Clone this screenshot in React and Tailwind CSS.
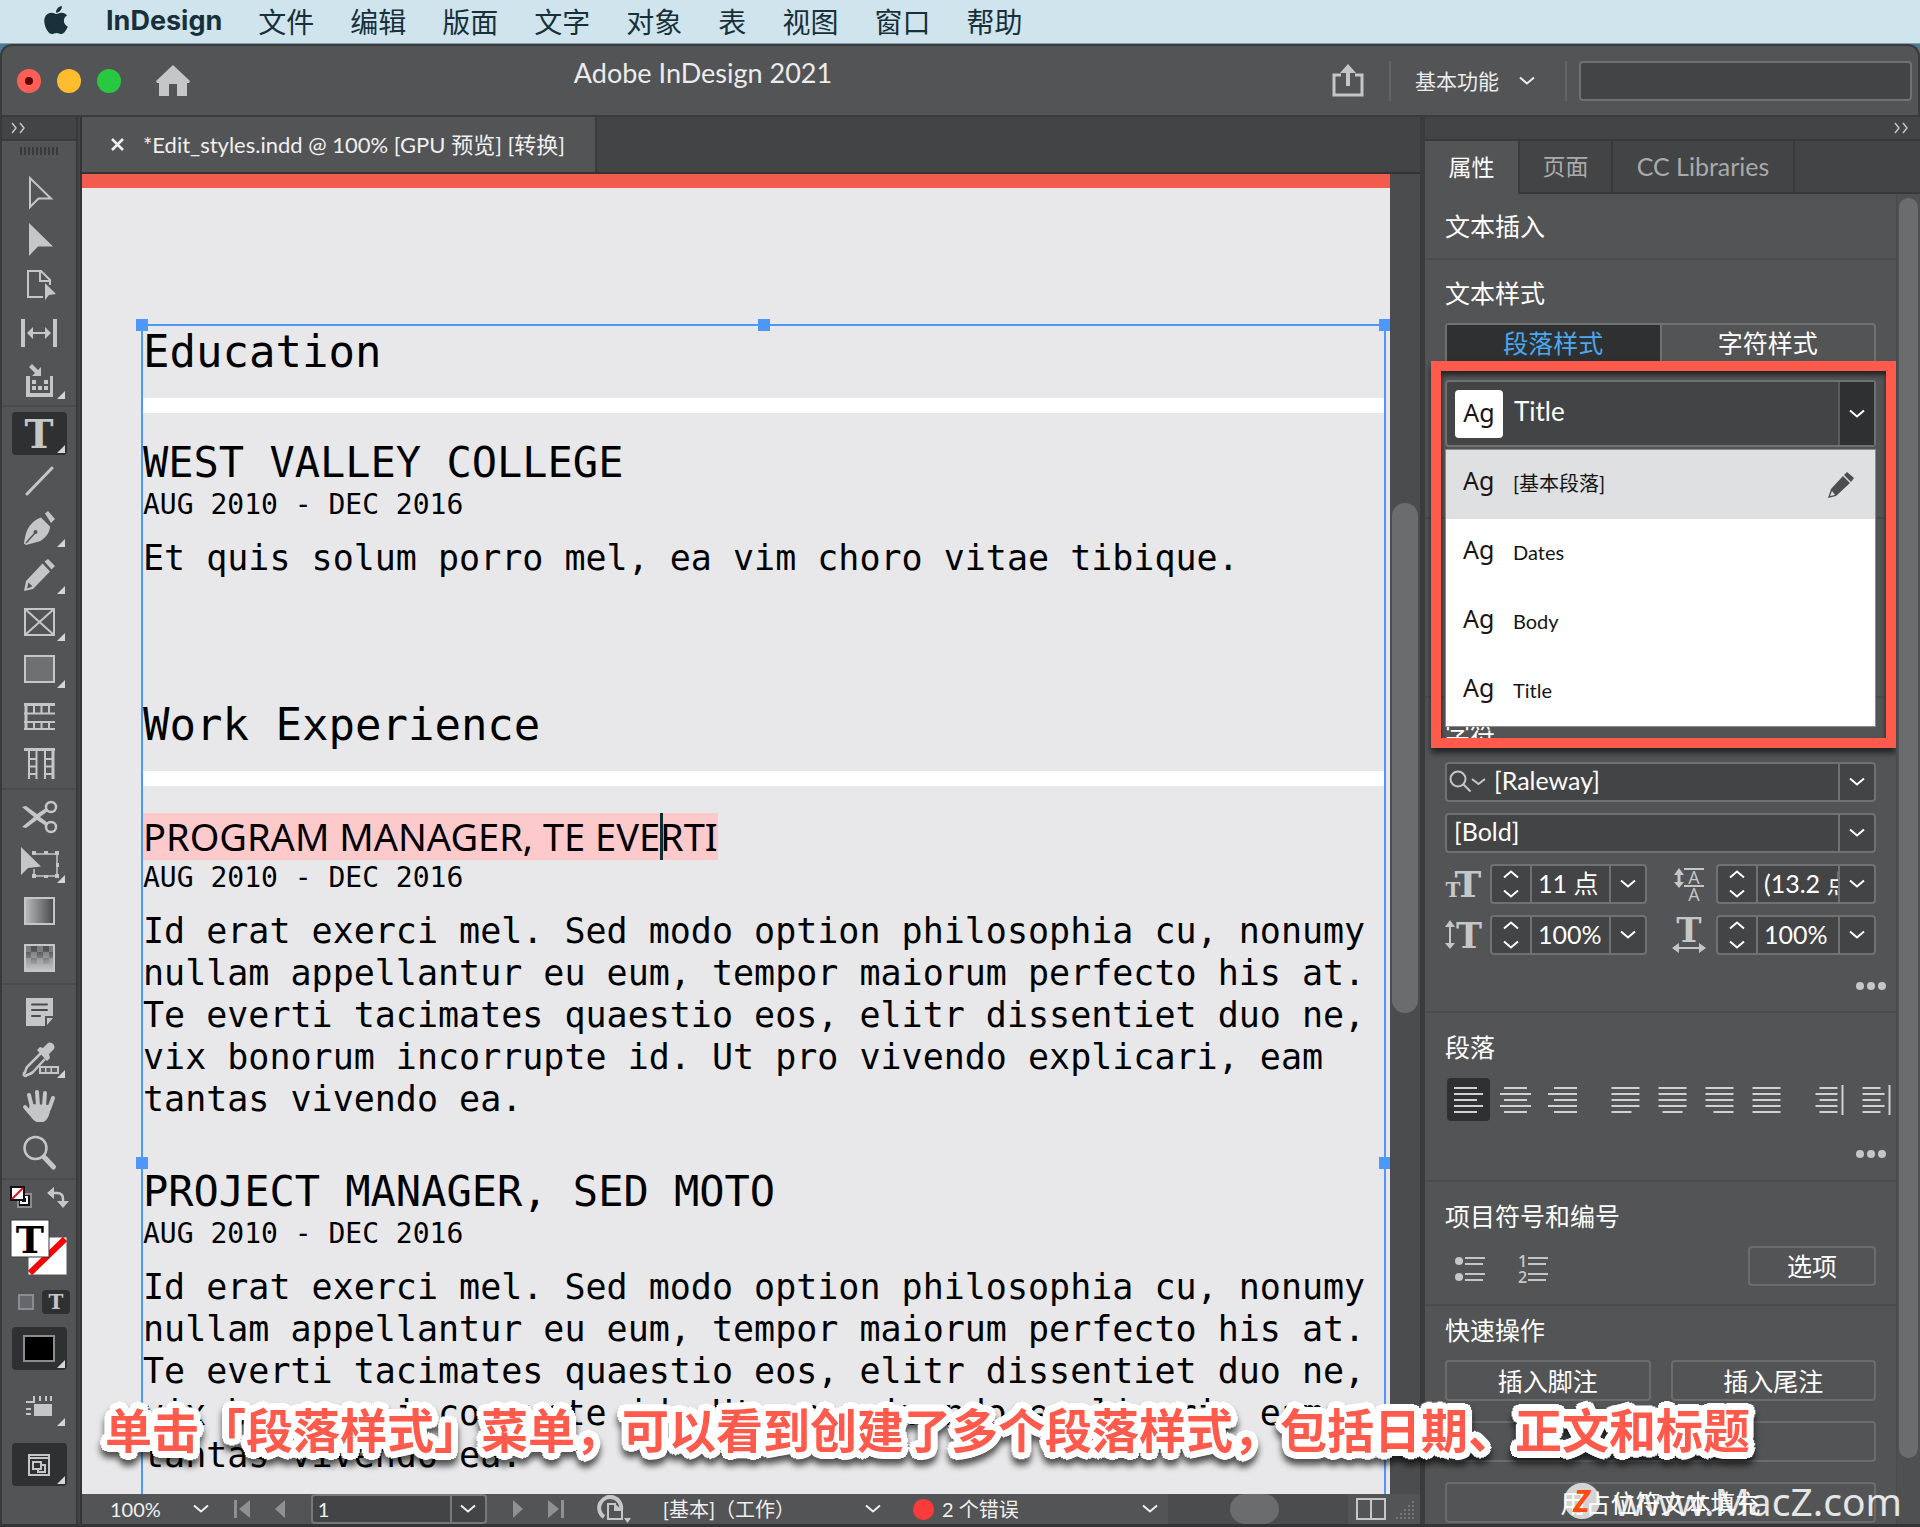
import { FaApple } from "react-icons/fa";

const ICON = "#c5c6c8";

const Chevron = ({ className = "" }) => (
  <svg width="16" height="10" viewBox="0 0 16 10" fill="none" stroke="currentColor" strokeWidth="2" className={className}>
    <path d="M1 1.5l7 6 7-6" />
  </svg>
);

const DoubleChevron = () => (
  <svg width="16" height="12" viewBox="0 0 16 12" fill="none" stroke={ICON} strokeWidth="1.5">
    <path d="M1 1l4 5-4 5M9 1l4 5-4 5" />
  </svg>
);

const SlabT = ({ x, y, size, fill = ICON }) => (
  <text x={x} y={y} fontSize={size} fill={fill} textAnchor="middle" fontWeight="bold" fontFamily="'DejaVu Serif', serif">
    T
  </text>
);

const SelectionIcon = () => <path d="M11 6v29l8.500-8.500H32z" fill="none" stroke={ICON} strokeWidth="2" />;

const DirectIcon = () => <path d="M10 4v33l9-9.500h15z" fill={ICON} />;

const PageIcon = () => (
  <g fill="none" stroke={ICON} strokeWidth="2">
    <path d="M24 31H9V5h13l9 9v5M21 5v10h10" />
    <path d="M26 17v17l4-5 7-1z" fill={ICON} stroke="none" />
  </g>
);

const GapIcon = () => (
  <g fill={ICON}>
    <path d="M2 6h4v28H2zM34 6h4v28h-4zM8 20l6-6v5h12v-5l6 6-6 6v-5H14v5z" />
  </g>
);

const CollectorIcon = () => (
  <g fill={ICON}>
    <path d="M7 16h4v17h20V16h3v21H7zM13 20h4v4h-4zM25 20h4v4h-4zM13 26h4v4h-4zM19 26h4v4h-4zM25 26h4v4h-4z" />
    <path d="M10 7l3-3 6 6 3-3v9h-9l3-3z" />
  </g>
);

const TypeIcon = () => <SlabT x={20} y={34} size={39} />;

const LineIcon = () => <path d="M8 33L33 7" stroke={ICON} strokeWidth="3" strokeLinecap="round" />;

const PenIcon = () => (
  <g fill={ICON}>
    <path d="M26 5.500l3-2.500 7 8-4 4z" />
    <path d="M22 9.500l9 9c0 5-4 12-11 15L7 37l-2-1.500c1-9 3-14 6-18 3-4 7-6.500 11-8z" />
    <path d="M7 35l9-10" stroke="#535456" strokeWidth="1.500" />
    <circle cx="16.500" cy="24" r="2" fill="#535456" />
  </g>
);

const PencilIcon = () => (
  <g fill={ICON}>
    <path d="M25.500 6.500L29 4l7 7-3.500 3.500z" />
    <path d="M23.500 8.500l7.500 8L14 34 5 36l2-10z" />
    <path d="M9.500 27.500l4 4-5.500 2z" fill="#535456" />
  </g>
);

const FrameIcon = () => (
  <path d="M6 7h29v26H6zM6 7l29 26M35 7L6 33" fill="none" stroke={ICON} strokeWidth="2" />
);

const RectIcon = () => <rect x="6" y="7" width="29" height="26" fill="#6f7072" stroke={ICON} strokeWidth="2" />;

const HorizontalGridIcon = () => (
  <g fill="none" stroke={ICON}>
    <path d="M5 8.500h31M7 7v27" strokeWidth="3" />
    <path d="M5 17.500h31M5 26h31M5 33h31M15 9v9M22.500 9v9M30 9v9M15 26v7M22.500 26v7M30 26v7" strokeWidth="2" />
  </g>
);

const VerticalGridIcon = () => (
  <g fill="none" stroke={ICON}>
    <path d="M5 6.500h31M34 5v31" strokeWidth="3" />
    <path d="M10 7v29M17.500 7v29M26 7v29M10 16h8M10 23.500h8M10 31h8M26 16h8M26 23.500h8M26 31h8" strokeWidth="2" />
  </g>
);

const ScissorsIcon = () => (
  <g>
    <g fill="none" stroke={ICON} strokeWidth="2.500">
      <circle cx="32" cy="10" r="5" />
      <circle cx="32" cy="30" r="5" />
    </g>
    <path d="M3 10l4-1 11 8 9-6 2 3-8 6 8 6-2 3-9-6-11 8-4-1 12-10z" fill={ICON} />
  </g>
);

const TransformIcon = () => (
  <g fill={ICON}>
    <path d="M2 3v28l7-7 13-1.500z" />
    <path d="M16 10h22v22H15v-7" fill="none" stroke={ICON} strokeWidth="1.500" />
    <path d="M13 7h4v4h-4zM25 7h4v3h-4zM36 7h4v4h-4zM37 19h3v4h-3zM36 30h4v4h-4zM25 31h4v3h-4zM13 30h4v4h-4z" />
  </g>
);

const GradientIcon = () => (
  <g>
    <defs>
      <linearGradient id="gradient-tool">
        <stop offset="0" stopColor="#bbbcbe" />
        <stop offset="1" stopColor="#47484a" />
      </linearGradient>
    </defs>
    <rect x="6" y="7" width="29" height="26" fill="url(#gradient-tool)" stroke={ICON} strokeWidth="2" />
  </g>
);

const FeatherIcon = () => (
  <g>
    <defs>
      <linearGradient id="feather-tool" x1="0" x2="0" y1="0" y2="1">
        <stop offset="0.2" stopColor="#c5c6c8" stopOpacity="0" />
        <stop offset="1" stopColor="#c5c6c8" />
      </linearGradient>
    </defs>
    <rect x="6" y="7" width="29" height="26" fill="#7b7c7e" />
    <path d="M12 8h6v6h-6zM24 8h6v6h-6zM6 14h6v6H6zM18 14h6v6h-6zM30 14h5v6h-5zM12 20h6v6h-6zM24 20h6v6h-6z" fill="#525355" />
    <rect x="6" y="7" width="29" height="26" fill="url(#feather-tool)" stroke={ICON} strokeWidth="2" />
  </g>
);

const NoteIcon = () => (
  <g>
    <path d="M7 6h27v18h-8v10H7z" fill={ICON} />
    <path d="M28 26h6l-6 7z" fill={ICON} />
    <path d="M13 12.500h15M13 18h15M13 24h8" stroke="#4a4b4d" strokeWidth="2" strokeLinecap="round" />
  </g>
);

const EyedropperIcon = () => (
  <g>
    <path d="M22 14L8 28c-2 3-1 6-3 6-1 2 1 4 3 2 2-1 4-1 6-3l12-13" fill="none" stroke={ICON} strokeWidth="2.500" />
    <path d="M18 11l3-3 3 1 5-5c3-2 8 2 6 6l-5 5 1 4-3 3z" fill={ICON} />
    <path d="M20 27h20v8H20z" fill={ICON} />
    <path d="M22 29h4v4h-4zM27.500 29h4v4h-4zM33 29h5v4h-5z" fill="#5c5d5f" />
  </g>
);

const HandIcon = () => (
  <g fill="none" stroke={ICON} strokeWidth="4" strokeLinecap="round">
    <path d="M13 21L10 9M19 20L18 6M25 20l1-13M30 23l4-11M12 28l-6-7" />
    <path d="M12 19l18 1c1 8-3 14-6 15h-6c-4-1-5-5-8-9z" fill={ICON} strokeWidth="2" />
  </g>
);

const ZoomIcon = () => (
  <g fill="none" stroke={ICON}>
    <circle cx="16.500" cy="15" r="11" strokeWidth="2.500" />
    <path d="M25 24l9.500 10" strokeWidth="5" strokeLinecap="round" />
  </g>
);

const BulletIcon = () => (
  <svg width="30" height="28" viewBox="0 0 30 28" fill={ICON}>
    <circle cx="4" cy="6" r="4" />
    <circle cx="4" cy="22" r="4" />
    <path d="M10 2h20v2H10zM10 8h18v2H10zM10 18h20v2H10zM10 24h18v2H10z" />
  </svg>
);

const NumberIcon = () => (
  <svg
    width="30"
    height="28"
    viewBox="0 0 30 28"
    fill={ICON}
    fontFamily="'Open Sans', sans-serif"
    fontSize="16"
    fontWeight="600"
    className="overflow-visible"
  >
    <text x="0" y="12">1</text>
    <text x="0" y="28">2</text>
    <path d="M10 2h20v2H10zM10 8h18v2H10zM10 18h20v2H10zM10 24h18v2H10z" />
  </svg>
);

const toolGroups = [
  [
    { name: "选择工具", Icon: SelectionIcon },
    { name: "直接选择工具", Icon: DirectIcon },
    { name: "页面工具", Icon: PageIcon },
    { name: "间隙工具", Icon: GapIcon },
    { name: "内容收集器工具", Icon: CollectorIcon, more: true },
  ],
  [
    { name: "文字工具", Icon: TypeIcon, more: true, active: true },
    { name: "直线工具", Icon: LineIcon },
    { name: "钢笔工具", Icon: PenIcon, more: true },
    { name: "铅笔工具", Icon: PencilIcon, more: true },
    { name: "矩形框架工具", Icon: FrameIcon, more: true },
    { name: "矩形工具", Icon: RectIcon, more: true },
    { name: "水平网格工具", Icon: HorizontalGridIcon },
    { name: "垂直网格工具", Icon: VerticalGridIcon },
  ],
  [
    { name: "剪刀工具", Icon: ScissorsIcon },
    { name: "自由变换工具", Icon: TransformIcon, more: true },
    { name: "渐变色板工具", Icon: GradientIcon },
    { name: "渐变羽化工具", Icon: FeatherIcon },
  ],
  [
    { name: "附注工具", Icon: NoteIcon },
    { name: "颜色主题工具", Icon: EyedropperIcon, more: true },
    { name: "抓手工具", Icon: HandIcon },
    { name: "缩放显示工具", Icon: ZoomIcon },
  ],
];

const Corner = () => (
  <svg width="8" height="8" viewBox="0 0 8 8" className="absolute right-0.5 bottom-0.5">
    <path d="M8 0v8H0z" fill="#d4d5d7" />
  </svg>
);

const ToolButton = ({ name, Icon, more, active }) => (
  <button
    aria-label={name}
    className={`relative my-0.5 flex h-[43px] w-[55px] items-center justify-center rounded ${active ? "bg-[#2f3032]" : ""}`}
  >
    <svg width="40" height="40" viewBox="0 0 40 40" className="overflow-visible">
      <Icon />
    </svg>
    {more && <Corner />}
  </button>
);

const Toolbar = () => (
  <aside className="flex w-[78px] shrink-0 flex-col border-x-2 border-[#38393b] bg-[#535456]">
    <div className="flex h-6 items-center border-b-2 border-[#3a3b3d] bg-[#434446] pl-[9px]">
      <DoubleChevron />
    </div>
    <div className="mx-auto mt-1.5 mb-[13px] h-2 w-[38px] bg-[repeating-linear-gradient(90deg,#38393b_0px,#38393b_2px,#535456_2px,#535456_4px)]" />
    {toolGroups.map((group, i) => (
      <div key={i} className="mb-[3px] flex flex-col items-center border-b-2 border-[#4a4b4d] pb-0.5">
        {group.map((tool) => (
          <ToolButton key={tool.name} {...tool} />
        ))}
      </div>
    ))}
    <div className="flex justify-between px-[7px] pt-0.5">
      <button aria-label="默认填色和描边">
        <svg width="24" height="24" viewBox="0 0 24 24">
          <path d="M9 9h13v13H9z" fill="#111" stroke="#8b8c8e" strokeWidth="2" />
          <path d="M12 12h6v6h-6z" fill="none" stroke="#fff" strokeWidth="2" />
          <path d="M2 2h13v13H2z" fill="#fff" stroke="#111" strokeWidth="2" />
          <path d="M3 14L14 3" stroke="#e8141c" strokeWidth="2" />
        </svg>
      </button>
      <button aria-label="互换填色和描边">
        <svg width="24" height="24" viewBox="0 0 24 24" fill="none" stroke={ICON} strokeWidth="2.5">
          <path d="M8 8h4q6 0 6 6v3" />
          <path d="M2 8l7-6v12zM12 16h12l-6 7z" fill={ICON} stroke="none" />
        </svg>
      </button>
    </div>
    <div className="px-2 pt-2.5">
      <svg width="60" height="58" viewBox="0 0 60 58" className="overflow-visible">
        <path d="M18 18h39v38H18z" fill="#fff" stroke="#555" />
        <path d="M20 54L55 20" stroke="#fb0007" strokeWidth="6" />
        <path d="M1 1h38v37H1z" fill="#fff" stroke="#38393b" />
        <SlabT x={20} y={34} size={38} fill="#000" />
      </svg>
    </div>
    <div className="mt-2.5 flex h-[30px] items-center justify-between pr-1.5 pl-4">
      <button aria-label="格式针对容器" className="h-4 w-4 border-2 border-[#8b8c8e] bg-[#66676a]" />
      <button aria-label="格式针对文本" className="flex h-6 w-7 items-center justify-center rounded bg-[#2f3032]">
        <svg width="20" height="18" viewBox="0 0 20 18" className="overflow-visible">
          <SlabT x={10} y={16} size={20} />
        </svg>
      </button>
    </div>
    <div className="flex flex-col items-center gap-[15px] pt-2.5">
      <button aria-label="应用颜色" className="relative flex h-[43px] w-[55px] items-center justify-center rounded bg-[#2f3032]">
        <span className="h-[27px] w-8 border-2 border-[#8b8c8e] bg-black" />
        <Corner />
      </button>
      <button aria-label="视图选项" className="relative flex h-[43px] w-[55px] items-center justify-center">
        <svg width="28" height="24" viewBox="0 0 28 24" fill={ICON}>
          <path d="M9 9h18v12H9zM8 1h2v7H1V6h7zM14 1h2v5h-2zM20 1h2v5h-2zM25 1h2v5h-2zM1 13h5v2H1zM1 18h5v2H1z" />
        </svg>
        <Corner />
      </button>
      <button aria-label="屏幕模式" className="relative flex h-[43px] w-[55px] items-center justify-center rounded bg-[#2f3032]">
        <svg width="24" height="24" viewBox="0 0 24 24" fill="none" stroke={ICON} strokeWidth="2">
          <path d="M2 2h20v20H2zM2 5h20" />
          <path d="M6 9h8v7H6z" />
          <path d="M15 12h3v7h-7v-3" />
        </svg>
        <Corner />
      </button>
    </div>
  </aside>
);

const menus = ["文件", "编辑", "版面", "文字", "对象", "表", "视图", "窗口", "帮助"];

const MenuBar = () => (
  <nav className="flex h-11 shrink-0 items-center border-b border-[#7fa3b5] bg-[#d0e4ed] pl-10 text-[28px] text-[#17303a]">
    <FaApple size={32} className="mb-1" />
    <button className="ml-[34px] font-[Inter] text-[27px] font-bold">InDesign</button>
    <div className="ml-9 flex gap-9">
      {menus.map((menu) => (
        <button key={menu}>{menu}</button>
      ))}
    </div>
  </nav>
);

const TitleBar = () => (
  <header className="flex h-[73px] shrink-0 items-center rounded-t-xl border-2 border-[#3a3b3d] bg-[#535456] pr-1.5 pl-[15px]">
    <div className="flex gap-4">
      <button aria-label="关闭" className="flex h-6 w-6 items-center justify-center rounded-full bg-[#ff5f57]">
        <span className="h-2 w-2 rounded-full bg-[#5c0503]" />
      </button>
      <button aria-label="最小化" className="h-6 w-6 rounded-full bg-[#febc2e]" />
      <button aria-label="缩放" className="h-6 w-6 rounded-full bg-[#28c840]" />
    </div>
    <button aria-label="主页" className="ml-[34px]">
      <svg width="36" height="32" viewBox="0 0 36 32" fill={ICON}>
        <path d="M18 0l17 16-1 2h-2v13H22V19h-8v12H4V18H2l-1-2z" />
      </svg>
    </button>
    <h1 className="flex-1 pr-[116px] pb-3.5 text-center text-[27px] text-[#ececed]">Adobe InDesign 2021</h1>
    <button aria-label="共享">
      <svg width="34" height="36" viewBox="0 0 34 36">
        <path d="M10 12H3v20h28V12h-7" fill="none" stroke={ICON} strokeWidth="3" />
        <path d="M17 1l8 9h-6v13h-4V10H9z" fill={ICON} />
      </svg>
    </button>
    <div className="mx-6 h-10 w-0.5 bg-[#636466]" />
    <button className="flex items-center gap-5 text-[21px] text-[#ececed]">
      基本功能
      <Chevron />
    </button>
    <div className="mr-3 ml-[30px] h-10 w-0.5 bg-[#636466]" />
    <input
      aria-label="搜索"
      className="h-10 w-[333px] rounded border-2 border-[#707173] bg-[#434446] px-2 text-[22px] text-white outline-none"
    />
  </header>
);

const body = `Id erat exerci mel. Sed modo option philosophia cu, nonumy
nullam appellantur eu eum, tempor maiorum perfecto his at.
Te everti tacimates quaestio eos, elitr dissentiet duo ne,
vix bonorum incorrupte id. Ut pro vivendo explicari, eam
tantas vivendo ea.`;

const SectionHeading = ({ children }) => (
  <>
    <h2 className="h-12 text-[44px] leading-[48px]">{children}</h2>
    <div className="mt-[22px] h-[15px] bg-white" />
  </>
);

const Dates = () => <p className="mt-0.5 text-[28px] leading-10">AUG 2010 - DEC 2016</p>;

const Body = ({ children }) => <p className="mt-3 text-[35px] leading-[42px]">{children}</p>;

const Handle = ({ className }) => <span className={`absolute h-3 w-3 bg-[#4f98fb] ${className}`} />;

const DocumentPage = () => (
  <article className="flex min-w-0 flex-1 flex-col overflow-hidden border-t-[14px] border-[#f25c4e] bg-[#e8e8ea] pt-[136px] pl-[59px] font-['DejaVu_Sans_Mono',monospace] text-black">
    <div className="relative mr-1 min-h-0 flex-1 border-2 border-b-0 border-[#4f98fb]">
      <Handle className="-top-[7px] -left-[7px]" />
      <Handle className="-top-[7px] left-1/2 -ml-1.5" />
      <Handle className="-top-[7px] -right-[7px]" />
      <Handle className="top-[831px] -left-[7px]" />
      <Handle className="top-[831px] -right-[7px]" />

      <section className="whitespace-pre pt-0.5">
        <SectionHeading>Education</SectionHeading>
        <h3 className="mt-[30px] text-[42px] leading-10">WEST VALLEY COLLEGE</h3>
        <Dates />
        <Body>Et quis solum porro mel, ea vim choro vitae tibique.</Body>
      </section>

      <section className="mt-[122px] whitespace-pre">
        <SectionHeading>Work Experience</SectionHeading>
        <h3 className="mt-[30px] flex h-10 items-center font-['Noto_Sans',sans-serif] text-[38px]">
          <span className="flex h-[47px] items-center bg-[#fccaca]">
            PROGRAM MANAGER, TE EVE
            <span className="-mr-[3px] h-full w-[3px] bg-[#0b2f33]" />
            RTI
          </span>
        </h3>
        <Dates />
        <Body>{body}</Body>
        <h3 className="mt-[52px] text-[42px] leading-10">PROJECT MANAGER, SED MOTO</h3>
        <Dates />
        <Body>{body}</Body>
      </section>
    </div>
  </article>
);

const StatusBar = () => (
  <footer className="flex h-[30px] shrink-0 items-center bg-[#535456] pl-7 text-xl text-[#f0f0f1]">
    <button className="flex items-center gap-8">
      100%
      <Chevron />
    </button>
    <div className="ml-6 flex gap-6 text-[#8f9092]">
      <button aria-label="第一页">
        <svg width="18" height="18" viewBox="0 0 18 18" fill="currentColor"><path d="M1 0h3v18H1zM17 0v18L6 9z" /></svg>
      </button>
      <button aria-label="上一页">
        <svg width="10" height="18" viewBox="0 0 10 18" fill="currentColor"><path d="M10 0v18L0 9z" /></svg>
      </button>
    </div>
    <div className="ml-[26px] flex h-[30px] w-44 rounded border-2 border-[#77787a] bg-[#434446]">
      <input aria-label="页码" defaultValue="1" className="min-w-0 flex-1 px-[5px] outline-none" />
      <span className="flex w-[35px] items-center justify-center border-l-2 border-[#77787a]">
        <Chevron />
      </span>
    </div>
    <div className="ml-[26px] flex gap-6 text-[#8f9092]">
      <button aria-label="下一页">
        <svg width="10" height="18" viewBox="0 0 10 18" fill="currentColor"><path d="M0 0v18l10-9z" /></svg>
      </button>
      <button aria-label="最后一页">
        <svg width="18" height="18" viewBox="0 0 18 18" fill="currentColor"><path d="M14 0h3v18h-3zM1 0v18l11-9z" /></svg>
      </button>
    </div>
    <button aria-label="打开" className="ml-8">
      <svg width="36" height="28" viewBox="0 0 36 28">
        <path d="M7 22A11 11 0 1 1 24 15" fill="none" stroke={ICON} strokeWidth="4" />
        <path d="M11 9h7v6h7v9H11z" fill="none" stroke={ICON} strokeWidth="2" />
        <path d="M17 8l8 7h-8zM27 23h7l-3.500 5z" fill={ICON} />
      </svg>
    </button>
    <span className="ml-[30px]">[基本]（工作）</span>
    <Chevron className="ml-[70px]" />
    <span className="ml-8 h-[21px] w-[21px] rounded-full bg-[#fb3b3b]" />
    <span className="ml-2">2 个错误</span>
    <Chevron className="ml-auto" />
    <div className="ml-2.5 flex h-full w-[180px] items-center justify-center bg-[#4b4c4e]">
      <span className="ml-[-8px] h-[30px] w-[49px] rounded-full bg-[#6b6c6e]" />
    </div>
    <svg width="30" height="22" viewBox="0 0 30 22" fill="none" stroke={ICON} strokeWidth="2" className="ml-2">
      <path d="M1 1h28v20H1zM15 1v20" />
    </svg>
    <svg width="20" height="20" viewBox="0 0 20 20" fill="#77787a" className="mr-1 ml-2.5">
      <path d="M16 2h2v2h-2zM16 6h2v2h-2zM12 6h2v2h-2zM16 10h2v2h-2zM12 10h2v2h-2zM8 10h2v2H8zM16 14h2v2h-2zM12 14h2v2h-2zM8 14h2v2H8zM4 14h2v2H4zM16 18h2v2h-2zM12 18h2v2h-2zM8 18h2v2H8zM4 18h2v2H4zM0 18h2v2H0z" />
    </svg>
  </footer>
);

const Workspace = () => (
  <main className="flex min-w-0 flex-1 flex-col">
    <div className="flex h-[57px] shrink-0 border-b-2 border-[#333436] bg-[#434446]">
      <div className="flex w-[515px] items-center gap-[19px] border-r-2 border-[#3a3b3d] bg-[#535456] pl-[29px] text-[22px] text-[#f0f0f1]">
        <button aria-label="关闭文档">
          <svg width="13" height="13" viewBox="0 0 13 13" stroke="currentColor" strokeWidth="2.500">
            <path d="M1 1l11 11M12 1L1 12" />
          </svg>
        </button>
        <span className="whitespace-nowrap">*Edit_styles.indd @ 100% [GPU 预览] [转换]</span>
      </div>
    </div>
    <div className="flex min-h-0 flex-1">
      <DocumentPage />
      <div className="flex w-[30px] justify-center bg-[#4b4c4e] pt-[329px]">
        <span className="h-[510px] w-[26px] rounded-full bg-[#6b6c6e]" />
      </div>
    </div>
    <StatusBar />
  </main>
);

const Section = ({ className = "", children }) => (
  <section className={`shrink-0 border-b-2 border-[#4a4b4d] px-5 ${className}`}>{children}</section>
);

const Label = ({ children }) => <h2 className="text-[25px] leading-8 text-white">{children}</h2>;

const styles = ["[基本段落]", "Dates", "Body", "Title"];

const StylePicker = () => (
  <div className="relative mt-[17px]">
    <button
      aria-haspopup="listbox"
      aria-expanded="true"
      className="flex h-[67px] w-full items-center rounded border-2 border-[#707173] bg-[#434446] pl-2 text-[26px] text-white"
    >
      <span className="flex h-12 w-12 items-center justify-center rounded-sm bg-white pb-0.5 font-['Noto_Sans'] text-[25px] text-[#1c1414]">
        Ag
      </span>
      <span className="flex-1 pb-1 pl-[11px] text-left">Title</span>
      <span className="flex h-full w-9 items-center justify-center border-l-2 border-[#5b5c5e] bg-[#2f3032]">
        <Chevron />
      </span>
    </button>
    <ul role="listbox" className="absolute top-[69px] z-10 w-full border border-[#8b8c8e] bg-white text-xl text-[#141414]">
      {styles.map((style, i) => (
        <li
          key={style}
          role="option"
          aria-selected={i === 0}
          className={`flex h-[69px] items-center pr-5 pb-1 pl-[17px] ${i === 0 ? "bg-[#dfe0e2]" : ""}`}
        >
          <span className="w-[50px] pb-1 font-['Noto_Sans'] text-[25px] text-[#1c1414]">Ag</span>
          <span className="flex-1">{style}</span>
          {i === 0 && (
            <svg width="28" height="28" viewBox="0 0 28 28" fill="#4c4d4f" className="mt-1">
              <path d="M20 1l7 6-3 4-7-7zM16 5l7 7L9 25l-8 2 3-9zM5 20l-2 5 5-1z" fillRule="evenodd" />
            </svg>
          )}
        </li>
      ))}
    </ul>
  </div>
);

const Select = ({ label, value, icon }) => (
  <div className="flex h-10 items-center rounded border-2 border-[#707173] bg-[#434446] text-white">
    {icon}
    <select aria-label={label} className="h-full min-w-0 flex-1 appearance-none px-[7px] pb-1 text-[25px] leading-8 outline-none">
      <option>{value}</option>
    </select>
    <span className="flex h-full w-9 items-center justify-center border-l-2 border-[#707173]">
      <Chevron />
    </span>
  </div>
);

const NumberField = ({ label, value, className }) => (
  <div className={`flex h-10 rounded border-2 border-[#707173] bg-[#434446] text-white ${className}`}>
    <span className="flex w-10 shrink-0 flex-col items-center justify-center gap-2.5 border-r-2 border-[#707173]">
      <Chevron className="rotate-180" />
      <Chevron />
    </span>
    <input aria-label={label} defaultValue={value} className="w-full min-w-0 flex-1 pl-1.5 text-[25px] outline-none" />
    <span className="flex w-9 shrink-0 items-center justify-center border-l-2 border-[#707173]">
      <Chevron />
    </span>
  </div>
);

const FieldIcon = ({ children }) => (
  <svg width="36" height="36" viewBox="0 0 36 36" className="shrink-0 overflow-visible">
    {children}
  </svg>
);

const More = ({ className }) => (
  <button aria-label="更多选项" className={`flex justify-end gap-[3px] ${className}`}>
    <span className="h-2 w-2 rounded-full bg-[#c5c6c8]" />
    <span className="h-2 w-2 rounded-full bg-[#c5c6c8]" />
    <span className="h-2 w-2 rounded-full bg-[#c5c6c8]" />
  </button>
);

const alignments = [
  { name: "左对齐", short: [0, 23], long: [0, 29], last: [0, 23], active: true },
  { name: "居中对齐", short: [4, 27], long: [0, 31], last: [4, 27] },
  { name: "右对齐", short: [6, 29], long: [0, 29], last: [6, 29] },
  { name: "双齐末行齐左", short: [0, 28], long: [0, 28], last: [0, 20], group: true },
  { name: "双齐末行居中", short: [0, 28], long: [0, 28], last: [4, 24] },
  { name: "双齐末行齐右", short: [0, 28], long: [0, 28], last: [8, 28] },
  { name: "全部强制双齐", short: [0, 28], long: [0, 28], last: [0, 28] },
  { name: "朝向书脊对齐", short: [4, 22], long: [0, 22], last: [4, 22], spine: true, group: true },
  { name: "背向书脊对齐", short: [0, 18], long: [0, 22], last: [0, 18], spine: true },
];

const AlignButton = ({ name, short, long, last, spine, active, group }) => (
  <button
    aria-label={name}
    className={`flex h-[43px] w-[43px] shrink-0 items-center justify-center rounded ${active ? "bg-[#2f3032]" : ""} ${group ? "ml-4" : ""}`}
  >
    <svg width="31" height="32" viewBox={`${(long[1] - 31 + (spine ? 6 : 0)) / 2} 0 31 32`} stroke="#d0d1d3" strokeWidth="2">
      {[short, long, short, long, last].map(([from, to], i) => (
        <path key={i} d={`M${from} ${4 + i * 6}H${to}`} />
      ))}
      {spine && <path d="M27 1v30" />}
    </svg>
  </button>
);

const outlineButton = "rounded border-2 border-[#6b6c6e] text-[25px] leading-8 text-white";

const PropertiesPanel = () => (
  <aside className="flex w-[500px] shrink-0 flex-col border-l-[5px] border-[#3a3b3d] bg-[#535456]">
    <div className="flex h-6 shrink-0 items-center justify-end border-b-2 border-[#38393b] bg-[#434446] pr-2.5">
      <DoubleChevron />
    </div>
    <div role="tablist" className="flex h-[53px] shrink-0 bg-[#434446] text-[23px] text-[#a9aaac]">
      <button role="tab" aria-selected="true" className="w-[95px] border-r-2 border-[#38393b] bg-[#535456] text-white">
        属性
      </button>
      <button role="tab" aria-selected="false" className="w-[93px] border-r-2 border-b-2 border-[#38393b]">
        页面
      </button>
      <button role="tab" aria-selected="false" className="w-[182px] border-r-2 border-b-2 border-[#38393b] text-[25px]">
        CC Libraries
      </button>
      <div className="flex-1 border-b-2 border-[#38393b]" />
    </div>
    <div className="flex min-h-0 flex-1">
      <div className="flex min-w-0 flex-1 flex-col overflow-hidden">
        <Section className="flex h-[66px] items-center">
          <Label>文本插入</Label>
        </Section>
        <Section className="relative h-[259px] pt-[17px]">
          <Label>文本样式</Label>
          <div className="mt-3.5 flex h-10 rounded-t border-2 border-[#707173] text-[25px] text-white">
            <button aria-pressed="true" className="flex-1 border-r-2 border-[#707173] bg-[#2f3032] text-[#4ba8ee]">
              段落样式
            </button>
            <button aria-pressed="false" className="flex-1">
              字符样式
            </button>
          </div>
          <StylePicker />
          <div className="pointer-events-none absolute top-[101px] right-0 left-1.5 z-20 h-[387px] border-10 border-[#ff5a4c] shadow-[0_5px_6px_rgba(0,0,0,0.6),inset_0_4px_5px_rgba(0,0,0,0.6)]" />
        </Section>
        <Section className="h-[179px]" />
        <Section className="h-[315px] pt-5">
          <Label>字符</Label>
          <div className="mt-3 flex flex-col gap-[11px]">
            <Select
              label="字体"
              value="[Raleway]"
              icon={
                <svg width="38" height="24" viewBox="0 0 38 24" fill="none" stroke={ICON} strokeWidth="2" className="ml-0.5">
                  <circle cx="9" cy="9" r="7.500" />
                  <path d="M14.500 14.500l7 7M23 9l6.500 5L36 9" />
                </svg>
              }
            />
            <Select label="字体样式" value="[Bold]" />
            <div className="flex items-center">
              <FieldIcon>
                <SlabT x={23} y={31} size={36} />
                <SlabT x={8} y={31} size={20} />
              </FieldIcon>
              <NumberField label="字体大小" value="11 点" className="ml-[9px] w-[157px]" />
              <div className="ml-6">
                <FieldIcon>
                  <path d="M8 2l5 7H9.500v7H13l-5 6-5-6h3.500V9H3zM13 2h20v2H13zM13 19h20v2H13z" fill={ICON} />
                  <g fill={ICON} fontFamily="'Open Sans', sans-serif" fontSize="18" textAnchor="middle">
                    <text x="23" y="18">A</text>
                    <text x="23" y="35">A</text>
                  </g>
                </FieldIcon>
              </div>
              <NumberField label="行距" value="(13.2 点)" className="ml-[9px] min-w-0 flex-1" />
            </div>
            <div className="flex items-center">
              <FieldIcon>
                <SlabT x={24} y={31} size={35} />
                <path d="M5 3l5 7H6v16h4l-5 6-5-6h4V10H0z" fill={ICON} />
              </FieldIcon>
              <NumberField label="垂直缩放" value="100%" className="ml-[9px] w-[157px]" />
              <div className="ml-6">
                <FieldIcon>
                  <SlabT x={18} y={25} size={34} />
                  <path d="M1 31l7-5v4h20v-4l7 5-7 5v-4H8v4z" fill={ICON} />
                </FieldIcon>
              </div>
              <NumberField label="水平缩放" value="100%" className="ml-[9px] min-w-0 flex-1" />
            </div>
          </div>
          <More className="-mr-2.5 mt-[27px] ml-auto" />
        </Section>
        <Section className="h-[169px] pt-[18px]">
          <Label>段落</Label>
          <div className="mt-[15px] ml-0.5 flex gap-1">
            {alignments.map((alignment) => (
              <AlignButton key={alignment.name} {...alignment} />
            ))}
          </div>
          <More className="-mr-2.5 mt-[29px] ml-auto" />
        </Section>
        <Section className="h-[124px] pt-[18px]">
          <Label>项目符号和编号</Label>
          <div className="mt-3.5 flex items-center pl-2.5">
            <button aria-label="项目符号列表" className="pt-1.5">
              <BulletIcon />
            </button>
            <button aria-label="编号列表" className="ml-[33px] pt-1.5">
              <NumberIcon />
            </button>
            <button className={`ml-auto h-10 w-32 ${outlineButton}`}>选项</button>
          </div>
        </Section>
        <section className="px-5 pt-2">
          <Label>快速操作</Label>
          <div className="mt-3.5 grid grid-cols-2 gap-5">
            <button className={`h-[41px] ${outlineButton}`}>插入脚注</button>
            <button className={`h-[41px] ${outlineButton}`}>插入尾注</button>
            <button aria-label="快速操作" className={`col-span-2 h-[41px] ${outlineButton}`} />
            <button className={`col-span-2 h-[41px] ${outlineButton}`}>用占位符文本填充</button>
          </div>
        </section>
      </div>
      <div className="flex w-6 shrink-0 justify-center border-l border-[#4a4b4d] bg-[#4f5052] pt-1 pb-[66px]">
        <span className="w-[19px] rounded-full bg-[#6b6c6e]" />
      </div>
    </div>
  </aside>
);

// two rings of hard shadows give the letters a rounded white outline
const Caption = () => (
  <p className="pointer-events-none absolute bottom-[62px] left-[105px] z-30 text-[47px] leading-[70px] font-bold whitespace-nowrap text-[#ff5a4c] drop-shadow-[0_6px_3px_rgba(0,0,0,0.65)] [text-shadow:7px_0_#fff,6px_3px_#fff,5px_5px_#fff,3px_6px_#fff,0_7px_#fff,-3px_6px_#fff,-5px_5px_#fff,-6px_3px_#fff,-7px_0_#fff,-6px_-3px_#fff,-5px_-5px_#fff,-3px_-6px_#fff,0_-7px_#fff,3px_-6px_#fff,5px_-5px_#fff,6px_-3px_#fff,3px_0_#fff,2px_2px_#fff,0_3px_#fff,-2px_2px_#fff,-3px_0_#fff,-2px_-2px_#fff,0_-3px_#fff,2px_-2px_#fff]">
    单击「段落样式」菜单，可以看到创建了多个段落样式，包括日期、正文和标题
  </p>
);

const Watermark = () => (
  <div className="pointer-events-none absolute right-[18px] bottom-1.5 z-30 flex items-center gap-3.5 font-['Noto_Sans'] text-[39px] leading-10 text-white/85">
    <span className="flex h-9 w-9 items-center justify-center rounded-full bg-white/75 text-3xl font-bold text-[#ff4a12] italic">
      Z
    </span>
    www.MacZ.com
  </div>
);

export default function App() {
  return (
    <div
      lang="zh-CN"
      className="relative flex h-screen flex-col overflow-hidden bg-[#4d7890] [font-family:Lato,'Noto_Sans_CJK_SC',sans-serif]"
    >
      <MenuBar />
      <TitleBar />
      <div className="flex min-h-0 flex-1 border-b-[3px] border-[#333436]">
        <Toolbar />
        <div className="w-1 shrink-0 border-r-2 border-[#333436] bg-[#434446]" />
        <Workspace />
        <PropertiesPanel />
      </div>
      <Caption />
      <Watermark />
    </div>
  );
}
